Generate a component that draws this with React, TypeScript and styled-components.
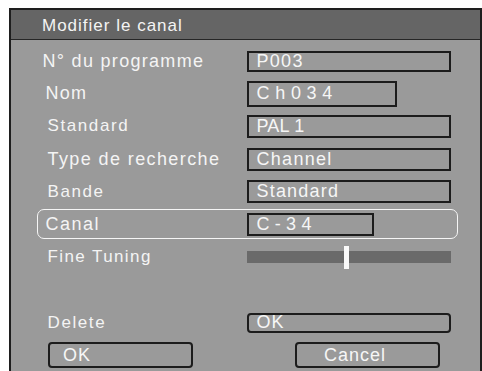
import React from 'react';
import styled, { createGlobalStyle } from 'styled-components';

const GlobalStyle = createGlobalStyle`
  html, body {
    margin: 0;
    padding: 0;
    background: #ffffff;
  }
  body {
    padding: 8px 0 0 9px;
    font-family: 'Liberation Sans', Arial, sans-serif;
    overflow: hidden;
  }
`;

const Panel = styled.div`
  width: 473px;
  height: 380px;
  box-sizing: border-box;
  border: 2px solid #1e1e1e;
  border-bottom: none;
  background: #9a9a9a;
  overflow: hidden;
`;

const TitleBar = styled.div`
  height: 30px;
  padding: 2px 0 0 31px;
  box-sizing: border-box;
  display: flex;
  align-items: center;
  background: #656565;
  border-bottom: 1px solid #262626;
  color: #f4f4f4;
  font-size: 17px;
  letter-spacing: 1px;
`;

const Body = styled.div`
  display: flex;
  flex-direction: column;
  gap: 2.7px;
  padding: 6px 0 0 26px;
`;

const Row = styled.div<{ $selected?: boolean }>`
  width: 421px;
  height: 30px;
  box-sizing: border-box;
  display: grid;
  grid-template-columns: 208.5px 1fr;
  align-items: center;
  border: 1.5px solid ${(p) => (p.$selected ? '#f6f6f6' : 'transparent')};
  border-radius: 7px;
`;

const Label = styled.span<{ $indent: number; $size: number; $spacing: number }>`
  padding-left: ${(p) => p.$indent}px;
  color: #f4f4f4;
  font-size: ${(p) => p.$size}px;
  letter-spacing: ${(p) => p.$spacing}px;
  white-space: nowrap;
`;

const Field = styled.div<{ $width: number; $height: number; $spacing: number; $round?: boolean }>`
  width: ${(p) => p.$width}px;
  height: ${(p) => p.$height}px;
  box-sizing: border-box;
  display: flex;
  align-items: center;
  padding-left: 8px;
  border: 2px solid #1c1c1c;
  border-radius: ${(p) => (p.$round ? '4px' : '0')};
  color: #f6f6f6;
  font-size: 18px;
  letter-spacing: ${(p) => p.$spacing}px;
  white-space: nowrap;
`;

const Track = styled.div`
  position: relative;
  width: 204px;
  height: 12px;
  background: #6a6a6a;
`;

const Thumb = styled.div`
  position: absolute;
  top: -5px;
  width: 5px;
  height: 23px;
  background: #fafafa;
`;

const ButtonRow = styled.div`
  width: 421px;
  height: 30px;
  display: flex;
  align-items: center;
  gap: 102px;
  padding-left: 11px;
  box-sizing: border-box;
`;

const Button = styled.div<{ $pad: number }>`
  width: 145px;
  height: 26px;
  box-sizing: border-box;
  display: flex;
  align-items: center;
  padding-left: ${(p) => p.$pad}px;
  border: 2px solid #1c1c1c;
  border-radius: 4px;
  color: #f6f6f6;
  font-size: 18px;
  letter-spacing: 1px;
`;

const Spacer = styled.div`
  height: 30px;
`;

const big = { $size: 18, $spacing: 1.3 };
const small = { $size: 17, $spacing: 1.6 };

export default function App() {
  const fine = 0.48;
  return (
    <>
      <GlobalStyle />
      <Panel>
        <TitleBar>Modifier le canal</TitleBar>
        <Body>
          <Row>
            <Label $indent={4.5} {...big}>N° du programme</Label>
            <Field $width={204} $height={21} $spacing={1.3}>P003</Field>
          </Row>
          <Row>
            <Label $indent={7.5} {...big}>Nom</Label>
            <Field $width={150} $height={26} $spacing={5.7}>Ch034</Field>
          </Row>
          <Row>
            <Label $indent={9.5} {...small}>Standard</Label>
            <Field $width={204} $height={23} $spacing={0.2}>PAL 1</Field>
          </Row>
          <Row>
            <Label $indent={9.5} $size={18} $spacing={1.4}>Type de recherche</Label>
            <Field $width={204} $height={23} $spacing={1.3}>Channel</Field>
          </Row>
          <Row>
            <Label $indent={9.5} {...small}>Bande</Label>
            <Field $width={204} $height={23} $spacing={1.2}>Standard</Field>
          </Row>
          <Row $selected>
            <Label $indent={7.5} $size={18} $spacing={1.5}>Canal</Label>
            <Field $width={127} $height={23} $spacing={5.3}>C-34</Field>
          </Row>
          <Row>
            <Label $indent={9.5} $size={17} $spacing={1.4}>Fine Tuning</Label>
            <Track>
              <Thumb style={{ left: `${fine * 204}px` }} />
            </Track>
          </Row>
          <Spacer />
          <Row>
            <Label $indent={9.5} {...small}>Delete</Label>
            <Field $width={204} $height={20} $spacing={1} $round>OK</Field>
          </Row>
          <ButtonRow>
            <Button $pad={13}>OK</Button>
            <Button $pad={27}>Cancel</Button>
          </ButtonRow>
        </Body>
      </Panel>
    </>
  );
}
